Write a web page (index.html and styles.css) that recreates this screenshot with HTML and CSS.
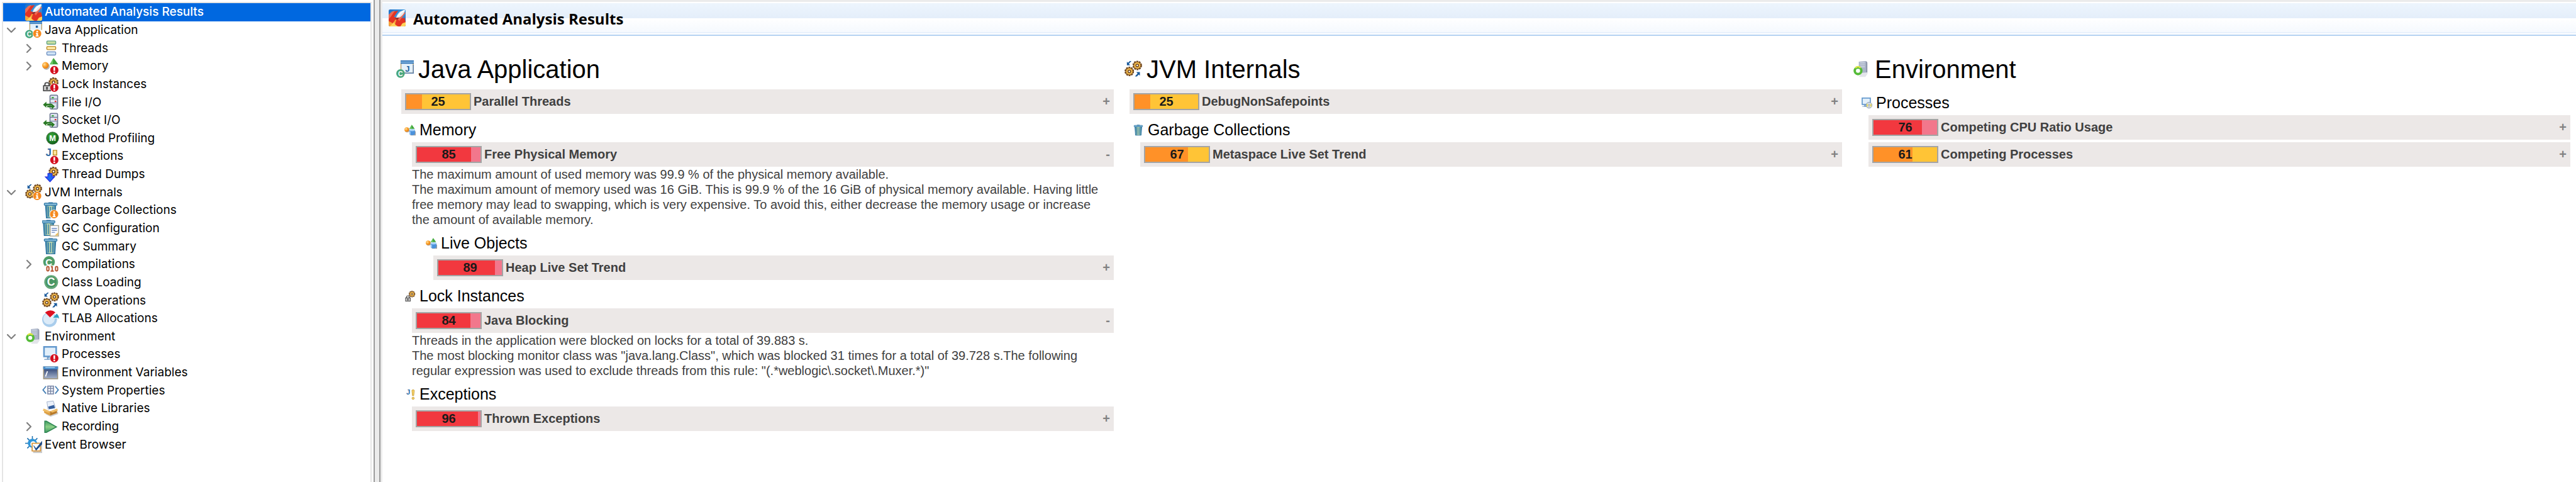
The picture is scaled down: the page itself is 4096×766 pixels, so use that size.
FILE: index.html
```html
<!DOCTYPE html>
<html lang="en">
<head>
<meta charset="utf-8">
<title>Automated Analysis Results</title>
<link rel="stylesheet" href="styles.css">
</head>
<body>
<svg class="sprite" aria-hidden="true">
  <defs>
    <linearGradient id="g-sky" x1="0" y1="0" x2="1" y2="1"><stop offset="0" stop-color="#1c6cc4"/><stop offset=".5" stop-color="#3d9ae0"/><stop offset="1" stop-color="#2a5aa8"/></linearGradient>
    <linearGradient id="g-can" x1="0" y1="0" x2="1" y2="0"><stop offset="0" stop-color="#2a78a8"/><stop offset=".5" stop-color="#d8e8b0"/><stop offset="1" stop-color="#2a78a8"/></linearGradient>
    <linearGradient id="g-term" x1="0" y1="0" x2="0" y2="1"><stop offset="0" stop-color="#20386c"/><stop offset="1" stop-color="#a8b4cc"/></linearGradient>
    <linearGradient id="g-play" x1="0" y1="0" x2="0" y2="1"><stop offset="0" stop-color="#3f9a62"/><stop offset=".5" stop-color="#8ccf86"/><stop offset="1" stop-color="#3f9a62"/></linearGradient>
    <radialGradient id="g-orange" cx=".35" cy=".35" r=".7"><stop offset="0" stop-color="#ffe0a0"/><stop offset=".5" stop-color="#fba22c"/><stop offset="1" stop-color="#e27a10"/></radialGradient>
    <radialGradient id="g-method" cx=".4" cy=".35" r=".7"><stop offset="0" stop-color="#3fae3f"/><stop offset="1" stop-color="#0c5c14"/></radialGradient>
    <symbol id="badge-info" viewBox="0 0 16 16"><circle cx="11.3" cy="11.5" r="4.3" fill="#fff"/><circle cx="11.3" cy="11.5" r="3.9" fill="#f58a1f"/><rect x="10.6" y="8.9" width="1.5" height="1.3" fill="#fff"/><path d="M10.1 10.8h2v2.5h.6v.9h-2.9v-.9h.8v-1.6h-.5z" fill="#fff"/></symbol>
    <symbol id="badge-error" viewBox="0 0 16 16"><circle cx="11.5" cy="11.5" r="4.3" fill="#fff"/><circle cx="11.5" cy="11.5" r="3.9" fill="#d40f1e"/><rect x="10.7" y="8.7" width="1.5" height="3.5" fill="#fff"/><rect x="10.7" y="12.9" width="1.5" height="1.4" fill="#fff"/></symbol>
    <symbol id="gear" viewBox="0 0 9 9"><circle cx="4.5" cy="4.5" r="3.7" fill="none" stroke="#6e451c" stroke-width="1.5" stroke-dasharray="1.6 .72"/><circle cx="4.5" cy="4.5" r="3.3" fill="#f3bc4e" stroke="#805322" stroke-width=".7"/><circle cx="4.5" cy="4.5" r="1.2" fill="#fff" stroke="#6e451c" stroke-width=".9"/></symbol>
    <symbol id="rocket" viewBox="0 0 16 16"><rect width="16" height="16" rx="1.4" fill="url(#g-sky)"/><path d="M0 7L5 2l4-1-4 6 3 1 7 0 1 4v3l-1 1H1L0 15z" fill="#e33424"/><path d="M0 5l3-3 3-1L2 7 0 9zM8 8l5-5 3 0-6 8z" fill="#ef6a52"/><path d="M0 11l4 2 4-6-2 7 3 2H1L0 15z" fill="#f6a43a"/><path d="M11 16l2-3 3-1v3l-1 1zM1 16l4-4 1 2 2 2z" fill="#ffd35a"/><path d="M7 8C8 4 11 1 15.4.5 15 4 12 7 9 8.2z" fill="#e8eaee"/><path d="M9 6.4C10.6 4 12.6 2 15 1" stroke="#fff" stroke-width="1.2" fill="none"/><path d="M7 8l3-.4-1.4 1.8L6 9.5z" fill="#8b2a2a"/></symbol>
    <symbol id="java-app" viewBox="0 0 16 16"><rect x="4.3" y=".5" width="11.2" height="11" fill="#e4f1fb" stroke="#b99f6a" stroke-width=".8"/><rect x="4" y="0" width="12" height="3" fill="#2b6fb3"/><rect x="4" y="1.1" width="12" height=".8" fill="#a8d0f0"/><path d="M15.6 4v7.6H7" stroke="#5b7fae" stroke-width=".8" fill="none"/><text x="8.2" y="10" class="glyph" font-size="7.5" fill="#24619c">J</text><circle cx="3.9" cy="11.9" r="3.9" fill="#4aa77e"/><text x="1.7" y="14.2" class="glyph" font-size="6" fill="#fff">C</text></symbol>
    <symbol id="java-app-info" viewBox="0 0 16 16"><path d="M4 0h12v8H4z" fill="#e4f1fb"/><rect x="4" y="0" width="12" height="2.4" fill="#2b6fb3"/><rect x="4" y="1" width="12" height=".6" fill="#a8d0f0"/><path d="M4.4 2.4V8M15.6 2.4V8" stroke="#b99f6a" stroke-width=".8"/><rect x="10" y="4" width="2" height="2" fill="#24619c"/><circle cx="3.9" cy="11.9" r="3.9" fill="#4aa77e"/><text x="1.7" y="14.2" class="glyph" font-size="6" fill="#fff">C</text><use href="#badge-info"/></symbol>
    <symbol id="threads" viewBox="0 0 16 16"><g stroke-width=".8"><rect x="4.4" y="1.3" width="8.4" height="3" rx=".8" fill="#c8dfa0" stroke="#62a386"/><rect x="4.4" y="6.4" width="8.4" height="3" rx=".8" fill="#ffeaa8" stroke="#b98a26"/><rect x="4.4" y="11.5" width="8.4" height="3" rx=".8" fill="#cfe3f6" stroke="#6d8fc0"/></g></symbol>
    <symbol id="shapes" viewBox="0 0 16 16"><circle cx="4" cy="7.8" r="3.4" fill="#b8b8b8"/><circle cx="3.3" cy="7" r="3.2" fill="url(#g-orange)"/><path d="M10.5.2L14.6 6H7z" fill="#3fa53a"/><path d="M10.5.2L10 6H7z" fill="#6cc765"/><path d="M8 15.4h8V9z" fill="#a0a0a0"/><path d="M7 7.5h8v6q-4 3-8 0z" fill="#4b92dc"/><ellipse cx="11" cy="7.8" rx="4" ry="1.5" fill="#a9d2f7"/><path d="M8 9.5v4" stroke="#b8dafa" stroke-width="1.2"/></symbol>
    <symbol id="shapes-error" viewBox="0 0 16 16"><circle cx="4" cy="8" r="3.2" fill="#b8b8b8"/><circle cx="3.1" cy="7" r="3.1" fill="url(#g-orange)"/><path d="M10.8.2L15.2 6H7.2z" fill="#3c9e38"/><path d="M10.5.2L10 6H7.4z" fill="#6cc765"/><use href="#badge-error"/></symbol>
    <symbol id="padlock" viewBox="0 0 8 9"><path d="M2 4V2.6Q2 .7 4 .7t2 1.9V4" stroke="#555" stroke-width="1.2" fill="none"/><rect x=".7" y="3.6" width="6.6" height="4.8" fill="#ccc" stroke="#3d3d3d" stroke-width=".9"/><rect x="3.3" y="4.6" width="1.3" height="2.8" fill="#333"/></symbol>
    <symbol id="lock" viewBox="0 0 16 16"><use href="#gear" x="6" y="0" width="9.5" height="9.5"/><use href="#padlock" x="1" y="6.5" width="8" height="9"/></symbol>
    <symbol id="lock-error" viewBox="0 0 16 16"><use href="#gear" x="6" y="1.6" width="9.5" height="9.5"/><use href="#padlock" x=".6" y="6" width="8" height="9"/><use href="#badge-error"/></symbol>
    <symbol id="io" viewBox="0 0 16 16"><rect x="7.4" y="1.4" width="7.2" height="13" rx="1" fill="#dfe5f0" stroke="#6a7490" stroke-width=".9"/><path d="M7.6 5h7M7.6 8.6h7" stroke="#6a7490" stroke-width=".7"/><rect x="9" y="3" width="2" height="1.3" fill="#3ba53b"/><rect x="11.8" y="6.6" width="1.6" height="1.2" fill="#e02222"/><path d="M13.6 9.4v4.6" stroke="#a9b1c6" stroke-width="1"/><path d="M.8 10.3L4 7.4v2h5v1.8H4v2zM12 11.9L9 9.3v1.7H4.8v1.8H9v1.9z" fill="#2b7a25"/></symbol>
    <symbol id="method" viewBox="0 0 16 16"><circle cx="9.8" cy="8" r="5.8" fill="url(#g-method)" stroke="#3a5a3a" stroke-width=".4"/><text x="6.6" y="10.7" class="glyph" font-size="7.6" fill="#fff">M</text></symbol>
    <symbol id="exception" viewBox="0 0 16 16"><text x="2.6" y="8" class="glyph" font-size="10" fill="#2f6ca5">J</text><path d="M10.6 2q2-1.6 3.4 0l-.8 7.6h-1.8z" fill="#f7d36b" stroke="#bf9124" stroke-width=".7"/><circle cx="12.3" cy="13.3" r="1.6" fill="#f7d36b" stroke="#bf9124" stroke-width=".7"/></symbol>
    <symbol id="exception-error" viewBox="0 0 16 16"><text x="3.2" y="7.6" class="glyph" font-size="10" fill="#2f6ca5">J</text><path d="M10.4 6.8V2.3h3.4v4.5z" fill="#ffe7a0" stroke="#bf9124" stroke-width=".8"/><use href="#badge-error"/></symbol>
    <symbol id="dump" viewBox="0 0 16 16"><use href="#gear" x="6" y=".4" width="9.5" height="9.5"/><path d="M5.4 7h4v3h2.4l-4.4 4.8L3 10.2h2.4z" fill="#1c6bf2" stroke="#2424e0" stroke-width=".7"/></symbol>
    <symbol id="gears" viewBox="0 0 16 16"><use href="#gear" x="7.2" y=".2" width="8.8" height="8.8"/><use href="#gear" x="0" y="5.6" width="8.8" height="8.8"/><path d="M2.2 4.4V1.2l1 1L4.9.6h1.4L4 3l1.2 1.4z" fill="#1a5a9c"/><path d="M14 10.5v3.4l-1.1-1.1-1.6 1.7H9.5l2.4-2.6-1.2-1.4z" fill="#1a5a9c"/></symbol>
    <symbol id="gears-info" viewBox="0 0 16 16"><use href="#gear" x="7.2" y=".2" width="8.8" height="8.8"/><use href="#gear" x="0" y="5.2" width="8.8" height="8.8"/><path d="M2.2 4.4V1.2l1 1L4.9.6h1.4L4 3l1.2 1.4z" fill="#1a5a9c"/><use href="#badge-info"/></symbol>
    <symbol id="can" viewBox="0 0 16 16"><path d="M3.2 3.2h9.6L12 15H4z" fill="url(#g-can)" stroke="#2a73a3" stroke-width=".8"/><path d="M6 4.5v9.3M8 4.5v9.3M10 4.5v9.3" stroke="#2a78a8" stroke-width=".8"/><rect x="2" y="1.1" width="12" height="2" rx=".6" fill="#8cc0dc" stroke="#2a73a3" stroke-width=".7"/><path d="M6 .8h4" stroke="#2a73a3" stroke-width="1"/></symbol>
    <symbol id="can-info" viewBox="0 0 16 16"><use href="#can"/><path d="M8 8h8v8H8z" fill="#fff"/><use href="#badge-info"/></symbol>
    <symbol id="can-config" viewBox="0 0 16 16"><use href="#can" x="-2"/><rect x="7.6" y="5.6" width="7.9" height="9.9" fill="#fbfcff" stroke="#a8a48c" stroke-width=".8"/><path d="M9 8.4h5M9 10.2h5M9 12h3" stroke="#5577b8" stroke-width=".7"/><path d="M12 15l3-3v3z" fill="#ecbc5c"/></symbol>
    <symbol id="compile" viewBox="0 0 16 16"><circle cx="6.5" cy="5.5" r="5.5" fill="#4f9c67"/><text x="3.1" y="8.7" class="glyph" font-size="9" fill="#fff">C</text><path d="M3 8.8h13V16H3z" fill="#fff"/><g fill="none" stroke="#b2522d" stroke-width="1.1"><rect x="4.4" y="9.9" width="2" height="4" rx=".8"/><path d="M8.2 10.1h1.3v4M8 14.1h3"/><rect x="12.6" y="9.9" width="2" height="4" rx=".8"/></g></symbol>
    <symbol id="class" viewBox="0 0 16 16"><circle cx="8.5" cy="7.8" r="6.5" fill="#4a9664"/><circle cx="8.5" cy="7.8" r="5.8" fill="none" stroke="#8cc49c" stroke-width=".5"/><text x="4.6" y="11.5" class="glyph" font-size="10.5" fill="#fff">C</text></symbol>
    <symbol id="tlab" viewBox="0 0 16 16"><circle cx="7" cy="8.8" r="7" fill="#a9cdec"/><circle cx="6.5" cy="8" r="5.4" fill="#dcebf8"/><path d="M7.6 7L2.8 2Q8-1.6 12.6 2z" fill="#dd1120"/><path d="M9.6 7.8L13.8 3.3Q16 5.5 16 7.8z" fill="#2f9fc0"/><path d="M7.6 7L13 2M9 7.4h6.5" stroke="#fff" stroke-width=".6"/></symbol>
    <symbol id="environment" viewBox="0 0 16 16"><path d="M5.5 15h6l2-3v-10" fill="#e3e5ea"/><path d="M5.5 1.2L12 .6v10.4l-6.5.5z" fill="#aab4c8"/><path d="M6.5 2.2h4.5M6.5 4h4.5M6.5 5.800h4.5" stroke="#d5dbe8" stroke-width=".7"/><path d="M12 .6l1.2 1v9.2L12 11z" fill="#8e97ac"/><circle cx="4.8" cy="9.4" r="3" fill="#fff" stroke="#54bb38" stroke-width="2.2"/><path d="M2.3 7q2.4-2.6 4.8-.2" stroke="#dde545" stroke-width="1.400" fill="none"/></symbol>
    <symbol id="monitor" viewBox="0 0 16 16"><path d="M1 0h13v10.5H1z" fill="#6298cd"/><path d="M2.5 1.5h10v7.5h-10z" fill="#e2effa"/><path d="M2 12.5h6M5 10.5h4v2H5z" fill="#b7cce3" stroke="#6b94c0" stroke-width=".8"/></symbol>
    <symbol id="processes" viewBox="0 0 16 16"><use href="#monitor"/><circle cx="11.5" cy="10.8" r="4.2" fill="#d5dbe3" stroke="#7489a4" stroke-width=".7"/><path d="M11.5 10.8L8 8.5v5zM11.5 10.8l3.5-2.3v5z" fill="#efe46a"/><circle cx="11.5" cy="10.8" r="1.2" fill="#fff" stroke="#6b7c94" stroke-width=".6"/></symbol>
    <symbol id="processes-error" viewBox="0 0 16 16"><use href="#monitor"/><use href="#badge-error"/></symbol>
    <symbol id="terminal" viewBox="0 0 16 16"><rect x="1.4" y="2.4" width="13.2" height="11.2" fill="url(#g-term)" stroke="#9a9078" stroke-width=".9"/><rect x="1" y="2" width="14" height="2.6" fill="#4a8fcc"/><path d="M3 3h9" stroke="#a8d4f4" stroke-width=".8"/><path d="M5 6.5L3.2 11.5" stroke="#fff" stroke-width="1"/></symbol>
    <symbol id="properties" viewBox="0 0 16 16"><path d="M3.7 4L.8 7.5l2.9 3.500M12.3 4l2.9 3.500-2.9 3.500" stroke="#4a83b8" stroke-width="1.1" fill="none"/><rect x="5.3" y="3.9" width="5.4" height="7.4" fill="#eef2f8" stroke="#7784a4" stroke-width=".9"/><path d="M8 4v7.3M5.3 6.2h5.4M5.3 8.7h5.4" stroke="#7784a4" stroke-width=".7"/></symbol>
    <symbol id="library" viewBox="0 0 16 16"><path d="M3 13l5 2.5L15 13v-2z" fill="#ccc"/><path d="M4.5 1.500l6-.8 2 6.300-7 1.500z" fill="#eaf0fa" stroke="#98a8c4" stroke-width=".5"/><path d="M5.6 6l5.6-1.500.8 3-5.500 1z" fill="#355f9d"/><path d="M1.5 8l6 2.500v4L2 12z" fill="#dda044"/><path d="M7.5 10.500L14 8v4l-6.500 2.500z" fill="#b87a28"/><path d="M1.5 8L.5 9.800l5.500 2 1.500-1.300zM14 8l1 1.700-5.500 2-2-1.200z" fill="#f0be68"/></symbol>
    <symbol id="play" viewBox="0 0 16 16"><path d="M2.5 2.500h1.500l9.500 5.500L4 13.200H2.500z" fill="url(#g-play)" stroke="#2f8653" stroke-width=".9"/></symbol>
    <symbol id="events" viewBox="0 0 16 16"><path d="M6.8 0v14M0 6.800h13.500M2 2l9.500 9.500M11.500 2L2 11.500" stroke="#1c6fae" stroke-width=".9"/><circle cx="6.8" cy="6.8" r="4.3" fill="#2f96da"/><circle cx="7.5" cy="7.5" r="2.6" fill="#fff"/><path d="M7.5 7H16v9H7.500z" fill="#ccc"/><rect x="6.6" y="6.8" width="7.8" height="7.2" fill="#fff" stroke="#d9963a" stroke-width="1"/><path d="M8 9l2.300 2.800L15.800 5v2.600L10.300 13.500z" fill="#1b4a88" stroke="#1b4a88" stroke-width=".5"/></symbol>
    <symbol id="chev-down" viewBox="0 0 16 16"><path d="M2 5l6 6 6-6" fill="none" stroke="#808080" stroke-width="2.2" stroke-linecap="round" stroke-linejoin="round"/></symbol>
    <symbol id="chev-right" viewBox="0 0 16 16"><path d="M6 2l6 6-6 6" fill="none" stroke="#808080" stroke-width="2.2" stroke-linecap="round" stroke-linejoin="round"/></symbol>
  </defs>
</svg>
<div class="window">
  <nav class="sidebar" aria-label="Outline">
    <ul class="tree">
      <li class="row selected"><span class="twist"></span><svg class="icon"><use href="#rocket"/></svg><a href="#results">Automated Analysis Results</a></li>
      <li class="row"><button class="twist" aria-label="Collapse"><svg><use href="#chev-down"/></svg></button><svg class="icon"><use href="#java-app-info"/></svg><a href="#java">Java Application</a></li>
      <li class="row child"><button class="twist" aria-label="Expand"><svg><use href="#chev-right"/></svg></button><svg class="icon"><use href="#threads"/></svg><a href="#threads-page">Threads</a></li>
      <li class="row child"><button class="twist" aria-label="Expand"><svg><use href="#chev-right"/></svg></button><svg class="icon"><use href="#shapes-error"/></svg><a href="#memory">Memory</a></li>
      <li class="row child"><span class="twist"></span><svg class="icon"><use href="#lock-error"/></svg><a href="#locks">Lock Instances</a></li>
      <li class="row child"><span class="twist"></span><svg class="icon"><use href="#io"/></svg><a href="#file-io">File I/O</a></li>
      <li class="row child"><span class="twist"></span><svg class="icon"><use href="#io"/></svg><a href="#socket-io">Socket I/O</a></li>
      <li class="row child"><span class="twist"></span><svg class="icon"><use href="#method"/></svg><a href="#profiling">Method Profiling</a></li>
      <li class="row child"><span class="twist"></span><svg class="icon"><use href="#exception-error"/></svg><a href="#exceptions">Exceptions</a></li>
      <li class="row child"><span class="twist"></span><svg class="icon"><use href="#dump"/></svg><a href="#dumps">Thread Dumps</a></li>
      <li class="row"><button class="twist" aria-label="Collapse"><svg><use href="#chev-down"/></svg></button><svg class="icon"><use href="#gears-info"/></svg><a href="#jvm">JVM Internals</a></li>
      <li class="row child"><span class="twist"></span><svg class="icon"><use href="#can-info"/></svg><a href="#gc">Garbage Collections</a></li>
      <li class="row child"><span class="twist"></span><svg class="icon"><use href="#can-config"/></svg><a href="#gc-config">GC Configuration</a></li>
      <li class="row child"><span class="twist"></span><svg class="icon"><use href="#can"/></svg><a href="#gc-summary">GC Summary</a></li>
      <li class="row child"><button class="twist" aria-label="Expand"><svg><use href="#chev-right"/></svg></button><svg class="icon"><use href="#compile"/></svg><a href="#compilations">Compilations</a></li>
      <li class="row child"><span class="twist"></span><svg class="icon"><use href="#class"/></svg><a href="#classes">Class Loading</a></li>
      <li class="row child"><span class="twist"></span><svg class="icon"><use href="#gears"/></svg><a href="#vm-ops">VM Operations</a></li>
      <li class="row child"><span class="twist"></span><svg class="icon"><use href="#tlab"/></svg><a href="#tlabs">TLAB Allocations</a></li>
      <li class="row"><button class="twist" aria-label="Collapse"><svg><use href="#chev-down"/></svg></button><svg class="icon"><use href="#environment"/></svg><a href="#env">Environment</a></li>
      <li class="row child"><span class="twist"></span><svg class="icon"><use href="#processes-error"/></svg><a href="#procs">Processes</a></li>
      <li class="row child"><span class="twist"></span><svg class="icon"><use href="#terminal"/></svg><a href="#env-vars">Environment Variables</a></li>
      <li class="row child"><span class="twist"></span><svg class="icon"><use href="#properties"/></svg><a href="#sys-props">System Properties</a></li>
      <li class="row child"><span class="twist"></span><svg class="icon"><use href="#library"/></svg><a href="#libs">Native Libraries</a></li>
      <li class="row child"><button class="twist" aria-label="Expand"><svg><use href="#chev-right"/></svg></button><svg class="icon"><use href="#play"/></svg><a href="#recording">Recording</a></li>
      <li class="row"><span class="twist"></span><svg class="icon"><use href="#events"/></svg><a href="#event-browser">Event Browser</a></li>
    </ul>
  </nav>
  <div class="splitter"></div>
  <main class="page" id="results">
    <header class="page-head"><svg class="icon"><use href="#rocket"/></svg><h1>Automated Analysis Results</h1></header>
    <div class="columns">
      <section>
        <h2><svg><use href="#java-app"/></svg>Java Application</h2>
        <div class="group">
          <button class="rule" aria-expanded="false"><span class="score info"><span class="fill" style="width:25%"></span><b>25</b></span><span class="name">Parallel Threads</span><span class="sign">+</span></button>
          <div class="group">
            <h3><svg><use href="#shapes"/></svg>Memory</h3>
            <button class="rule" aria-expanded="true"><span class="score warn"><span class="fill" style="width:85%"></span><b>85</b></span><span class="name">Free Physical Memory</span><span class="sign">-</span></button>
            <p>The maximum amount of used memory was 99.9 % of the physical memory available.<br>The maximum amount of memory used was 16 GiB. This is 99.9 % of the 16 GiB of physical memory available. Having little free memory may lead to swapping, which is very expensive. To avoid this, either decrease the memory usage or increase the amount of available memory.</p>
            <div class="group deep">
              <h3><svg><use href="#shapes"/></svg>Live Objects</h3>
              <button class="rule" aria-expanded="false"><span class="score warn"><span class="fill" style="width:89%"></span><b>89</b></span><span class="name">Heap Live Set Trend</span><span class="sign">+</span></button>
            </div>
            <h3><svg><use href="#lock"/></svg>Lock Instances</h3>
            <button class="rule" aria-expanded="true"><span class="score warn"><span class="fill" style="width:84%"></span><b>84</b></span><span class="name">Java Blocking</span><span class="sign">-</span></button>
            <p>Threads in the application were blocked on locks for a total of 39.883 s.<br>The most blocking monitor class was "java.lang.Class", which was blocked 31 times for a total of 39.728 s.The following regular expression was used to exclude threads from this rule: "(.*weblogic\.socket\.Muxer.*)"</p>
            <h3><svg><use href="#exception"/></svg>Exceptions</h3>
            <button class="rule" aria-expanded="false"><span class="score warn"><span class="fill" style="width:96%"></span><b>96</b></span><span class="name">Thrown Exceptions</span><span class="sign">+</span></button>
          </div>
        </div>
      </section>
      <section>
        <h2><svg><use href="#gears"/></svg>JVM Internals</h2>
        <div class="group">
          <button class="rule" aria-expanded="false"><span class="score info"><span class="fill" style="width:25%"></span><b>25</b></span><span class="name">DebugNonSafepoints</span><span class="sign">+</span></button>
          <div class="group">
            <h3><svg><use href="#can"/></svg>Garbage Collections</h3>
            <button class="rule" aria-expanded="false"><span class="score info"><span class="fill" style="width:67%"></span><b>67</b></span><span class="name">Metaspace Live Set Trend</span><span class="sign">+</span></button>
          </div>
        </div>
      </section>
      <section>
        <h2><svg><use href="#environment"/></svg>Environment</h2>
        <div class="group">
          <div class="group">
            <h3><svg><use href="#processes"/></svg>Processes</h3>
            <button class="rule" aria-expanded="false"><span class="score warn"><span class="fill" style="width:76%"></span><b>76</b></span><span class="name">Competing CPU Ratio Usage</span><span class="sign">+</span></button>
            <button class="rule" aria-expanded="false"><span class="score info"><span class="fill" style="width:61%"></span><b>61</b></span><span class="name">Competing Processes</span><span class="sign">+</span></button>
          </div>
        </div>
      </section>
    </div>
  </main>
</div>
</body>
</html>
```
FILE: styles.css
```css
* { box-sizing: border-box; }

body {
  margin: 0;
  background: #fff;
  color: #000;
  font-family: "Liberation Sans", Arial, sans-serif;
  font-size: 20px;
}

button {
  border: 0;
  padding: 0;
  background: none;
  color: inherit;
  font: inherit;
  text-align: left;
  cursor: pointer;
}

.sprite { position: absolute; width: 0; height: 0; }

.glyph { font-family: "Liberation Sans", sans-serif; font-weight: 700; }

.window { display: flex; min-height: 100vh; }

/* Outline tree */
.sidebar {
  display: flex;
  flex: 0 0 588px;
  margin: 3px 0 0 3px;
  border: 2px solid #e5e5e5;
  border-bottom: 0;
  padding-bottom: 45px;
}

.tree {
  display: grid;
  flex: 1;
  grid-auto-rows: 1fr;
  margin: 0;
  padding: 0;
  list-style: none;
  font-family: Inter, sans-serif;
  font-size: 19px;
  line-height: 28px;
}

.row { display: flex; align-items: center; padding-left: 5px; }
.row.child { padding-left: 32px; }
.row a { color: inherit; text-decoration: none; white-space: nowrap; }
.row.selected { background: #0068e0; color: #fff; font-weight: 500; }

.twist { display: flex; width: 20px; margin-right: 10px; }
.twist svg { width: 16px; height: 16px; }

.icon { flex: none; width: 27px; height: 27px; margin-right: 4px; }

.splitter {
  flex: 0 0 11px;
  margin: 0 3px;
  border: solid #9b9b9b;
  border-width: 0 2px;
  background: #ebebeb;
  box-shadow: 3px 0 #ebebeb;
}

/* Result page */
.page { flex: 1; min-width: 0; border-top: 3px solid #ebebeb; }

.page-head {
  display: flex;
  align-items: center;
  height: 54px;
  padding: 0 10px 4px;
  border-top: 2px solid #fff;
  border-bottom: 2px solid #b3d1f2;
  background: linear-gradient(#edf5fd, #e4eefa 24px, #fff 24px, #f5f9fe 46px, #e8f1fc 46px, #e8f1fc 48px, #fff 48px);
}

.page-head .icon { margin-right: 12px; }

.page-head h1 {
  margin: 0;
  padding-top: 3px;
  font: 700 24px/32px "Open Sans", sans-serif;
}

.columns {
  display: grid;
  grid-template-columns: repeat(3, minmax(0, 1fr));
  gap: 17px;
  padding: 30px 9px 20px 22px;
}

h2, h3 { display: flex; align-items: center; margin: 0; font-weight: 400; }

h2 { gap: 7px; padding-bottom: 5px; font-size: 40px; line-height: 46px; }
h2 svg { width: 28px; height: 28px; }

h3 { gap: 6px; margin-left: -12px; padding: 11px 0 1px; font-size: 25px; line-height: 29px; }
h3 svg { width: 18px; height: 20px; }

section > .group { padding-left: 8px; }
.group .group { padding-left: 17px; }
.group .deep { padding-left: 34px; }

.rule {
  display: flex;
  align-items: center;
  gap: 4px;
  width: 100%;
  margin-top: 4px;
  padding: 6px;
  background: #ece8e7;
  color: #404040;
  font-weight: 700;
  line-height: 27px;
}

.score {
  display: grid;
  width: 105px;
  height: 27px;
  border: 2px solid #a4a4a4;
  color: #1a1a1a;
  line-height: 23px;
  text-align: center;
}

.score > * { grid-area: 1 / 1; }
.score.info { background: #ffc436; }
.score.info .fill { background: #ff9128; }
.score.warn { background: #f2778c; }
.score.warn .fill { background: #f2383f; }

.name { flex: 1; }
.sign { color: #828282; }

p { margin: 0; padding-right: 10px; color: #404040; line-height: 24px; }
```
